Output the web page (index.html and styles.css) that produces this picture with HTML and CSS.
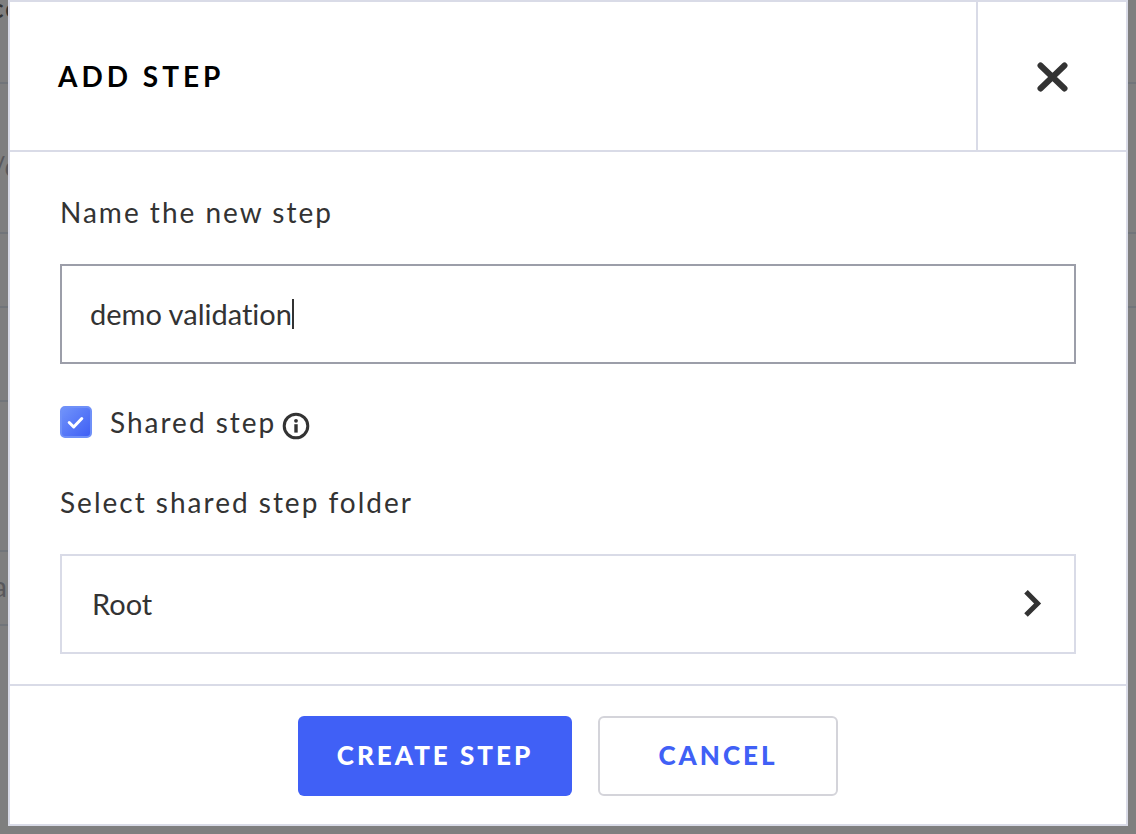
FILE: index.html
```html
<!DOCTYPE html>
<html lang="en">
<head>
  <meta charset="UTF-8">
  <meta name="viewport" content="width=device-width, initial-scale=1.0">
  <title>Add step</title>
  <link rel="stylesheet" href="styles.css">
</head>
<body>
  <!-- page behind the dialog -->
  <div class="page" aria-hidden="true">
    <div class="row row-title">co</div>
    <div class="row row-tall">/o</div>
    <div class="row"></div>
    <div class="panel">
      <div class="row row-gap"></div>
      <div class="row row-tall"></div>
      <div class="row row-text">a</div>
    </div>
  </div>

  <div class="overlay">
    <form class="modal" role="dialog" aria-labelledby="modal-title">
      <header class="modal-header">
        <h1 class="modal-title" id="modal-title">ADD STEP</h1>
        <button class="close" type="button" aria-label="Close">
          <svg width="32" height="32" viewBox="0 0 32 32">
            <path d="M4.5 5.5L28.5 28.5M28.5 5.5L4.5 28.5" fill="none" stroke="#333" stroke-width="6" stroke-linecap="round"/>
          </svg>
        </button>
      </header>

      <div class="modal-body">
        <label class="label" for="step-name">Name the new step</label>
        <div class="field">
          <input class="field-input" id="step-name" type="text" size="14" value="demo validation">
          <span class="caret"></span>
        </div>

        <div class="shared">
          <label class="check">
            <input class="check-box" id="shared" type="checkbox" checked>
            <svg class="check-mark" width="32" height="32" viewBox="0 0 32 32">
              <path d="M9.2 16.5L13.7 21L21.8 12.5" fill="none" stroke="#fff" stroke-width="3" stroke-linecap="round" stroke-linejoin="round"/>
            </svg>
          </label>
          <label class="label" for="shared">Shared step</label>
          <svg class="info" width="28" height="28" viewBox="0 0 28 28">
            <circle cx="14" cy="14" r="11.8" fill="none" stroke="#333" stroke-width="3"/>
            <path d="M12.3 12.2H15.7V20.6H12.3Z" fill="#333"/>
            <circle cx="14" cy="8.8" r="1.9" fill="#333"/>
          </svg>
        </div>

        <span class="label" id="folder-label">Select shared step folder</span>
        <button class="folder" type="button" aria-labelledby="folder-label folder-value">
          <span id="folder-value">Root</span>
          <svg width="20" height="28" viewBox="0 0 20 28">
            <path d="M2 1.8L13.6 13.4L2 25" fill="none" stroke="#333" stroke-width="5"/>
          </svg>
        </button>
      </div>

      <footer class="modal-footer">
        <button class="btn btn-primary" type="submit">CREATE STEP</button>
        <button class="btn btn-secondary" type="button">CANCEL</button>
      </footer>
    </form>
  </div>
</body>
</html>
```
FILE: styles.css
```css
* {
  box-sizing: border-box;
}

body {
  margin: 0;
  background: #fff;
  color: #333;
  font-family: Lato, "Open Sans", sans-serif;
  font-size: 28px;
  line-height: 36px;
  overflow: hidden;
}

button,
input {
  margin: 0;
  padding: 0;
  border: 0;
  background: none;
  color: inherit;
  font: inherit;
}

svg {
  display: block;
}

/* page behind */
.page {
  position: absolute;
  inset: 0;
  overflow: hidden;
}

.row {
  height: 74px;
  border-bottom: 2px solid #e2eaf5;
  color: #b0b0b8;
  text-indent: -7px;
}

.row-title {
  height: 84px;
  color: #666;
  font-size: 26px;
  font-weight: 700;
  line-height: 16px;
  letter-spacing: 2px;
  text-indent: -9px;
}

.row-tall {
  height: 150px;
  padding-top: 64px;
}

.row-gap {
  height: 94px;
}

.row-text {
  padding-top: 16px;
}

.panel {
  margin-right: 30px;
}

.overlay {
  position: relative;
  padding: 0 8px 8px;
  background: rgba(0, 0, 0, 0.5);
  min-height: 100vh;
}

/* dialog */
.modal {
  background: #fff;
  border: 2px solid #d9dbe7;
}

.modal-header {
  display: flex;
  height: 150px;
  border-bottom: 2px solid #d9dbe7;
}

.modal-title {
  flex: 1;
  margin: 0;
  padding-left: 48px;
  align-self: center;
  color: #000;
  font-size: 28px;
  font-weight: 700;
  letter-spacing: 4px;
}

.close {
  display: flex;
  align-items: center;
  justify-content: center;
  width: 150px;
  border-left: 2px solid #d9dbe7;
}

.modal-body {
  padding: 42px 50px 30px;
}

.label {
  display: block;
  letter-spacing: 2px;
}

.field,
.folder {
  display: flex;
  align-items: center;
  width: 100%;
  height: 100px;
  margin-top: 34px;
  padding: 0 28px;
  border: 2px solid #9c9ea9;
  font-size: 29px;
  font-variant-ligatures: none;
}

.field-input {
  field-sizing: content;
  outline: 0;
}

.caret {
  width: 2px;
  height: 30px;
  background: #333;
}

.shared {
  display: flex;
  align-items: center;
  margin: 40px 0 44px;
}

.check {
  display: grid;
  margin-right: 18px;
}

.check-box,
.check-mark {
  grid-area: 1 / 1;
}

.check-box {
  appearance: none;
  width: 32px;
  height: 32px;
  border: 2px solid #6f90f8;
  border-radius: 5px;
  background: linear-gradient(135deg, #7093fa, #3f5ff5);
}

.check-mark {
  pointer-events: none;
}

.info {
  margin: 8px 0 0 6px;
}

.folder {
  justify-content: space-between;
  padding: 0 30px;
  border-color: #d9dbe7;
}

.modal-footer {
  display: flex;
  justify-content: center;
  gap: 26px;
  padding: 30px 0 28px;
  border-top: 2px solid #d9dbe7;
}

.btn {
  height: 80px;
  padding-bottom: 2px;
  border-radius: 6px;
  font-size: 26px;
  font-weight: 900;
  letter-spacing: 3px;
}

.btn-primary {
  width: 274px;
  background: #4060f6;
  color: #fff;
}

.btn-secondary {
  width: 240px;
  border: 2px solid #d4d4da;
  color: #4060f6;
}
```
